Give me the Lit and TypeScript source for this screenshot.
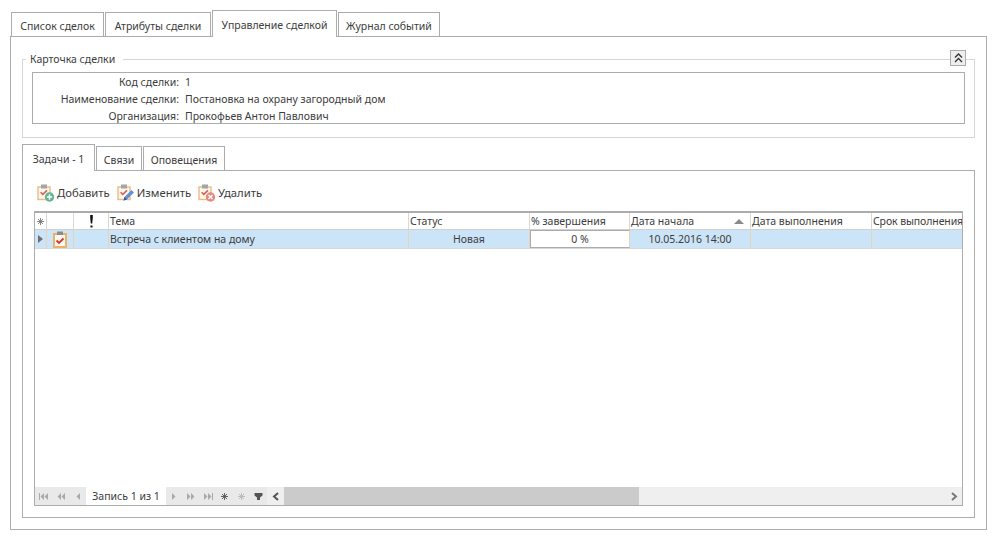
import { LitElement, css, html, svg } from "lit"
import { customElement, state } from "lit/decorators.js"

const columns = [
  { title: "Тема", width: 300 },
  { title: "Статус", width: 121 },
  { title: "% завершения", width: 100 },
  { title: "Дата начала", width: 121, sorted: true },
  { title: "Дата выполнения", width: 121 },
  { title: "Срок выполнения", width: 91 },
]

// бланк с галочкой, общий для кнопок тулбара
const clipboard = svg`
  <rect x="1" y="3" width="12" height="12.5" fill="#fdf6ec" stroke="#eabd85" stroke-width="1.4" />
  <rect x="4" y="0.5" width="6" height="4" fill="#a5a5a5" />
  <path d="M3.6 8.2l2.2 2.2 4.2-4" fill="none" stroke="#d8625a" stroke-width="1.6" />
`

const addIcon = html`<svg width="18" height="18" viewBox="0 0 18 18">
  ${clipboard}
  <circle cx="12.5" cy="13" r="4.7" fill="#62b295" />
  <path d="M12.5 10.3v5.4M9.8 13h5.4" stroke="#fff" stroke-width="1.5" />
</svg>`

const editIcon = html`<svg width="18" height="18" viewBox="0 0 18 18">
  ${clipboard}
  <path d="M6.5 16.5l1-3.5 7-7 2.5 2.5-7 7z" fill="#5f92d6" />
  <path d="M6.5 16.5l1-3.5 2.5 2.5z" fill="#2c5a9a" />
</svg>`

const deleteIcon = html`<svg width="18" height="18" viewBox="0 0 18 18">
  ${clipboard}
  <circle cx="12.5" cy="13" r="4.7" fill="#e5887e" />
  <path d="M10.5 11l4 4M14.5 11l-4 4" stroke="#fff" stroke-width="1.5" />
</svg>`

const taskIcon = html`<svg width="14" height="17" viewBox="0 0 14 17">
  <rect x="1" y="3" width="12" height="13" fill="#fdf8f0" stroke="#ecb26a" stroke-width="2" />
  <rect x="4" y="0.5" width="6" height="3.5" fill="#8c8c8c" />
  <path d="M3.5 9.5l2.5 2.5 4.5-4.5" fill="none" stroke="#d8352a" stroke-width="1.8" />
</svg>`

const exclIcon = html`<svg width="5" height="13" viewBox="0 0 5 13">
  <path d="M1.2 0h2.6v3L3.2 8.5H1.8L1.2 3zM1.5 10.5h2v2h-2z" fill="#111" />
</svg>`

const navFirst = html`<svg width="11" height="9" viewBox="0 0 11 9"><path d="M1 1h1v7H1zM6 1v7L2.5 4.5zM10 1v7L6.5 4.5z" /></svg>`
const navPrevPage = html`<svg width="10" height="9" viewBox="0 0 10 9"><path d="M5 1v7L1.5 4.5zM9 1v7L5.5 4.5z" /></svg>`
const navPrev = html`<svg width="6" height="9" viewBox="0 0 6 9"><path d="M5 1v7L1.5 4.5z" /></svg>`
const navNext = html`<svg width="6" height="9" viewBox="0 0 6 9"><path d="M1 1v7l3.5-3.5z" /></svg>`
const navNextPage = html`<svg width="10" height="9" viewBox="0 0 10 9"><path d="M1 1v7l3.5-3.5zM5 1v7l3.5-3.5z" /></svg>`
const navLast = html`<svg width="11" height="9" viewBox="0 0 11 9"><path d="M1 1v7l3.5-3.5zM5 1v7l3.5-3.5zM9 1h1v7H9z" /></svg>`
const asterisk = html`<svg width="9" height="9" viewBox="0 0 9 9"><path d="M4.5 1v7M1 4.5h7M2 2l5 5M7 2L2 7" fill="none" stroke="currentColor" stroke-width="0.9" /></svg>`

@customElement("app-root")
export class AppRoot extends LitElement {
  // ширины вкладок снятые со скриншота
  @state()
  mainTabs = [
    { label: "Список сделок", width: 93 },
    { label: "Атрибуты сделки", width: 106 },
    { label: "Управление сделкой", width: 125 },
    { label: "Журнал событий", width: 102 },
  ]

  @state()
  subTabs = [
    { label: "Задачи - 1", width: 73 },
    { label: "Связи", width: 46 },
    { label: "Оповещения", width: 82 },
  ]

  renderTabs(tabs: { label: string; width: number }[], active: number) {
    return html`<div class="tabs">
      ${tabs.map((t, i) => html`<div class="tab ${i === active ? "active" : ""}" style="width:${t.width}px">${t.label}</div>`)}
    </div>`
  }

  render() {
    return html`
      <div class="page">
        ${this.renderTabs(this.mainTabs, 2)}
        <div class="pane main-pane">
          <div class="card-wrap">
            <fieldset class="card">
              <legend>Карточка сделки</legend>
              <div class="card-box">
                <div class="lbl">Код сделки:</div>
                <div class="val">1</div>
                <div class="lbl">Наименование сделки:</div>
                <div class="val">Постановка на охрану загородный дом</div>
                <div class="lbl">Организация:</div>
                <div class="val">Прокофьев Антон Павлович</div>
              </div>
            </fieldset>
            <div class="collapse">
              <svg width="9" height="10" viewBox="0 0 9 10">
                <path d="M1 4.5l3.5-3.5 3.5 3.5M1 9l3.5-3.5L8 9" fill="none" stroke="#333" stroke-width="1.3" />
              </svg>
            </div>
          </div>

          ${this.renderTabs(this.subTabs, 0)}
          <div class="pane sub-pane">
            <div class="toolbar">
              <div class="tool">${addIcon}<span>Добавить</span></div>
              <div class="tool">${editIcon}<span>Изменить</span></div>
              <div class="tool">${deleteIcon}<span>Удалить</span></div>
            </div>

            <div class="grid">
              <div class="row head">
                <div class="cell c-ind star">${asterisk}</div>
                <div class="cell c-icon"></div>
                <div class="cell c-prio">${exclIcon}</div>
                ${columns.map(
                  (c) => html`<div class="cell title" style="width:${c.width}px">
                    <span>${c.title}</span>${c.sorted ? html`<i class="sort"></i>` : null}
                  </div>`
                )}
              </div>
              <div class="row data">
                <div class="cell c-ind"><i class="pointer"></i></div>
                <div class="cell c-icon">${taskIcon}</div>
                <div class="cell c-prio"></div>
                <div class="cell" style="width:300px">Встреча с клиентом на дому</div>
                <div class="cell center" style="width:121px">Новая</div>
                <div class="cell percent" style="width:100px">0 %</div>
                <div class="cell center" style="width:121px">10.05.2016 14:00</div>
                <div class="cell" style="width:121px"></div>
                <div class="cell last" style="width:91px"></div>
              </div>
              <div class="grid-body"></div>
              <div class="grid-foot">
                <div class="nav left">${navFirst}${navPrevPage}${navPrev}</div>
                <div class="record">Запись 1 из 1</div>
                <div class="nav right">
                  ${navNext}${navNextPage}${navLast}
                  <span class="dark">${asterisk}</span>
                  <span class="faded">${asterisk}</span>
                  <svg class="dark" width="9" height="9" viewBox="0 0 9 9"><path d="M0.5 1h8v2.5L6 5.5V8H3V5.5L0.5 3.5z" /></svg>
                </div>
                <div class="scroll">
                  <div class="arrow">
                    <svg width="8" height="9" viewBox="0 0 8 9"><path d="M6 1L2 4.5 6 8" fill="none" stroke="#555" stroke-width="2" /></svg>
                  </div>
                  <div class="thumb"></div>
                  <div class="track"></div>
                  <div class="arrow">
                    <svg width="8" height="9" viewBox="0 0 8 9"><path d="M2 1l4 3.5L2 8" fill="none" stroke="#777" stroke-width="2" /></svg>
                  </div>
                </div>
              </div>
            </div>
          </div>
        </div>
      </div>
    `
  }

  static styles = css`
    :host {
      display: block;
      width: 997px;
      height: 540px;
      background: #fff;
      color: #3c3c3c;
      font-family: "Noto Sans", "Liberation Sans", sans-serif;
      font-size: 10.5px;
      line-height: 14px;
      overflow: hidden;
    }
    .page {
      padding: 10px 10px 0;
      width: 977px;
    }
    .tabs {
      display: flex;
      gap: 1px;
      padding-left: 1px;
      align-items: flex-end;
      height: 27px;
      margin-bottom: -1px;
      position: relative;
      z-index: 1;
    }
    .tab {
      box-sizing: border-box;
      height: 24px;
      margin-bottom: 1px;
      padding: 2px 0 0;
      border: 1px solid #acacac;
      border-bottom: 0;
      display: flex;
      align-items: center;
      justify-content: center;
      background: #fff;
      white-space: nowrap;
    }
    .tab.active {
      height: 27px;
      margin-bottom: 0;
      padding-bottom: 1px;
    }
    .pane {
      border: 1px solid #acacac;
      background: #fff;
    }
    .main-pane {
      height: 492px;
      padding: 0 11px;
    }
    .card-wrap {
      position: relative;
      padding-top: 14px;
    }
    .card {
      margin: 0;
      padding: 5px 9px 0;
      border: 1px solid #d6d6d6;
      height: 87px;
      box-sizing: border-box;
      min-width: 0;
    }
    legend {
      margin-left: -6px;
      padding: 0 8px 0 4px;
      line-height: 16px;
    }
    .card-box {
      box-sizing: border-box;
      border: 1px solid #acacac;
      height: 52px;
      padding-top: 2px;
      display: grid;
      grid-template-columns: 146px 1fr;
      column-gap: 6px;
      align-content: center;
      line-height: 17px;
    }
    .lbl {
      text-align: right;
    }
    .collapse {
      position: absolute;
      right: 9px;
      top: 13px;
      width: 16px;
      height: 16px;
      background: #eee;
      border: 1px solid #acacac;
      display: flex;
      align-items: center;
      justify-content: center;
      box-sizing: border-box;
    }
    .main-pane > .tabs {
      margin-top: 6px;
      padding-left: 0;
    }
    .sub-pane {
      height: 346px;
      padding: 0 11px;
    }
    .toolbar {
      display: flex;
      gap: 7px;
      box-sizing: border-box;
      height: 40px;
      padding: 3px 0 0 3px;
      align-items: center;
      font-size: 11.3px;
    }
    .tool {
      display: flex;
      align-items: center;
      gap: 2px;
    }
    .grid {
      border: 1px solid #acacac;
      height: 293px;
      display: flex;
      flex-direction: column;
      overflow: hidden;
    }
    .row {
      display: flex;
      flex: none;
      box-sizing: border-box;
    }
    .head {
      height: 18px;
      border-top: 1px solid #acacac;
      border-bottom: 1px solid #d0d0d0;
    }
    .data {
      height: 19px;
      background: #cce4f7;
      border-bottom: 1px solid #d8d8d8;
    }
    .cell {
      box-sizing: border-box;
      flex: none;
      border-right: 1px solid #d8d8d8;
      padding: 0 1px;
      display: flex;
      align-items: center;
      white-space: nowrap;
      overflow: hidden;
    }
    .head .cell {
      justify-content: space-between;
    }
    .title:last-child {
      border-right: 0;
      padding-right: 0;
      letter-spacing: -0.1px;
    }
    .data .cell {
      border-right-color: #e4d4b8;
    }
    .c-ind {
      width: 12px;
      padding: 0;
    }
    .head .c-ind,
    .data .c-ind {
      justify-content: center;
    }
    .star {
      color: #777;
    }
    .c-icon {
      width: 27px;
      justify-content: center;
    }
    .head .c-prio,
    .c-prio {
      width: 35px;
      justify-content: center;
    }
    .sort {
      width: 0;
      height: 0;
      border: 5px solid transparent;
      border-top: 0;
      border-bottom: 5px solid #8a8a8a;
      margin-right: 5px;
    }
    .pointer {
      width: 0;
      height: 0;
      border: 4px solid transparent;
      border-right: 0;
      border-left: 5px solid #707070;
    }
    .center {
      justify-content: center;
    }
    .percent {
      justify-content: center;
      background: #fff;
      border: 1px solid #acacac;
    }
    .last {
      border-right: 0;
    }
    .grid-body {
      flex: 1;
    }
    .grid-foot {
      flex: none;
      height: 18px;
      display: flex;
      background: #efefef;
    }
    .nav {
      display: grid;
      align-items: center;
      justify-items: center;
      flex: none;
      color: #aaa;
      fill: #aaa;
      background: #e9e9e9;
    }
    .nav.left {
      width: 51px;
      grid-template-columns: repeat(3, 1fr);
    }
    .nav.right {
      width: 101px;
      grid-template-columns: repeat(6, 1fr);
    }
    .nav span {
      display: flex;
    }
    .dark {
      color: #555;
      fill: #555;
    }
    .faded {
      color: #b9b9b9;
    }
    .record {
      box-sizing: border-box;
      background: #fff;
      width: 80px;
      flex: none;
      display: flex;
      align-items: center;
      justify-content: center;
      white-space: nowrap;
    }
    .scroll {
      flex: 1;
      display: flex;
    }
    .arrow {
      width: 17px;
      display: flex;
      align-items: center;
      justify-content: center;
    }
    .thumb {
      width: 355px;
      background: #cbcbcb;
    }
    .track {
      flex: 1;
    }
  `
}
